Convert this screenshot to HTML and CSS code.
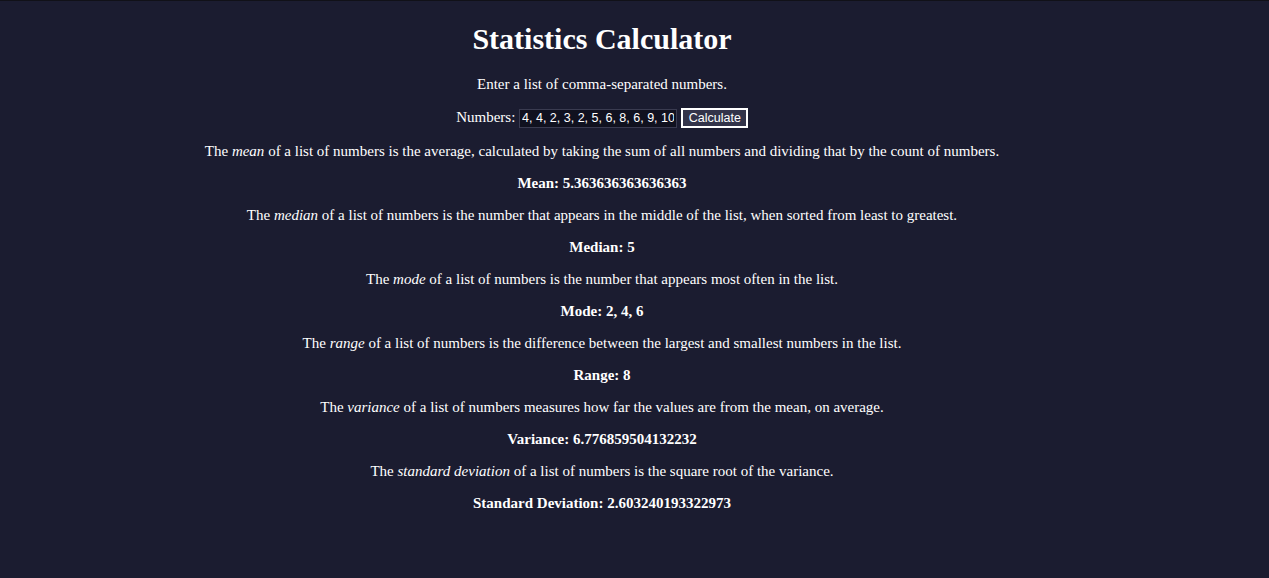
FILE: index.html
```html
<!DOCTYPE html>
<html lang="en">
<head>
<meta charset="utf-8">
<title>Statistics Calculator</title>
<link rel="stylesheet" href="styles.css">
</head>
<body>
<main class="page">
  <h1 class="title">Statistics Calculator</h1>
  <p>Enter a list of comma-separated numbers.</p>
  <p class="form-row">
    <label for="nums">Numbers:</label>
    <input id="nums" class="num-input" type="text" value="4, 4, 2, 3, 2, 5, 6, 8, 6, 9, 10">
    <button class="calc-btn" type="button">Calculate</button>
  </p>
  <p>The <em>mean</em> of a list of numbers is the average, calculated by taking the sum of all numbers and dividing that by the count of numbers.</p>
  <p class="result">Mean: 5.363636363636363</p>
  <p>The <em>median</em> of a list of numbers is the number that appears in the middle of the list, when sorted from least to greatest.</p>
  <p class="result">Median: 5</p>
  <p>The <em>mode</em> of a list of numbers is the number that appears most often in the list.</p>
  <p class="result">Mode: 2, 4, 6</p>
  <p>The <em>range</em> of a list of numbers is the difference between the largest and smallest numbers in the list.</p>
  <p class="result">Range: 8</p>
  <p>The <em>variance</em> of a list of numbers measures how far the values are from the mean, on average.</p>
  <p class="result">Variance: 6.776859504132232</p>
  <p>The <em>standard deviation</em> of a list of numbers is the square root of the variance.</p>
  <p class="result">Standard Deviation: 2.603240193322973</p>
</main>
</body>
</html>
```
FILE: styles.css
```css
html {
  background: #1b1c30;
}
body {
  margin: 0;
  border-top: 1px solid #111118;
  background: #1b1c30;
  color: #ffffff;
  font-family: "Liberation Serif", "Times New Roman", serif;
  font-size: 15px;
  min-height: 577px;
}
.page {
  width: 1204px;
  text-align: center;
  padding-top: 1px;
}
.title {
  font-size: 30px;
  font-weight: bold;
  margin: 20px 0 20px;
}
p {
  margin: 15px 0;
}
.result {
  font-weight: bold;
}
.num-input {
  box-sizing: border-box;
  font-family: "Liberation Sans", Arial, sans-serif;
  font-size: 12.5px;
  color: #ffffff;
  background: #10111f;
  border: 1px solid #3a3b50;
  padding: 0 2px;
  width: 158px;
  height: 19px;
  margin: 0;
}
.calc-btn {
  box-sizing: border-box;
  font-family: "Liberation Sans", Arial, sans-serif;
  font-size: 12.5px;
  color: #ffffff;
  background: #33344a;
  border: 2px solid #ffffff;
  padding: 0 6px;
  height: 20px;
  width: 67px;
  margin: 0;
}
```
